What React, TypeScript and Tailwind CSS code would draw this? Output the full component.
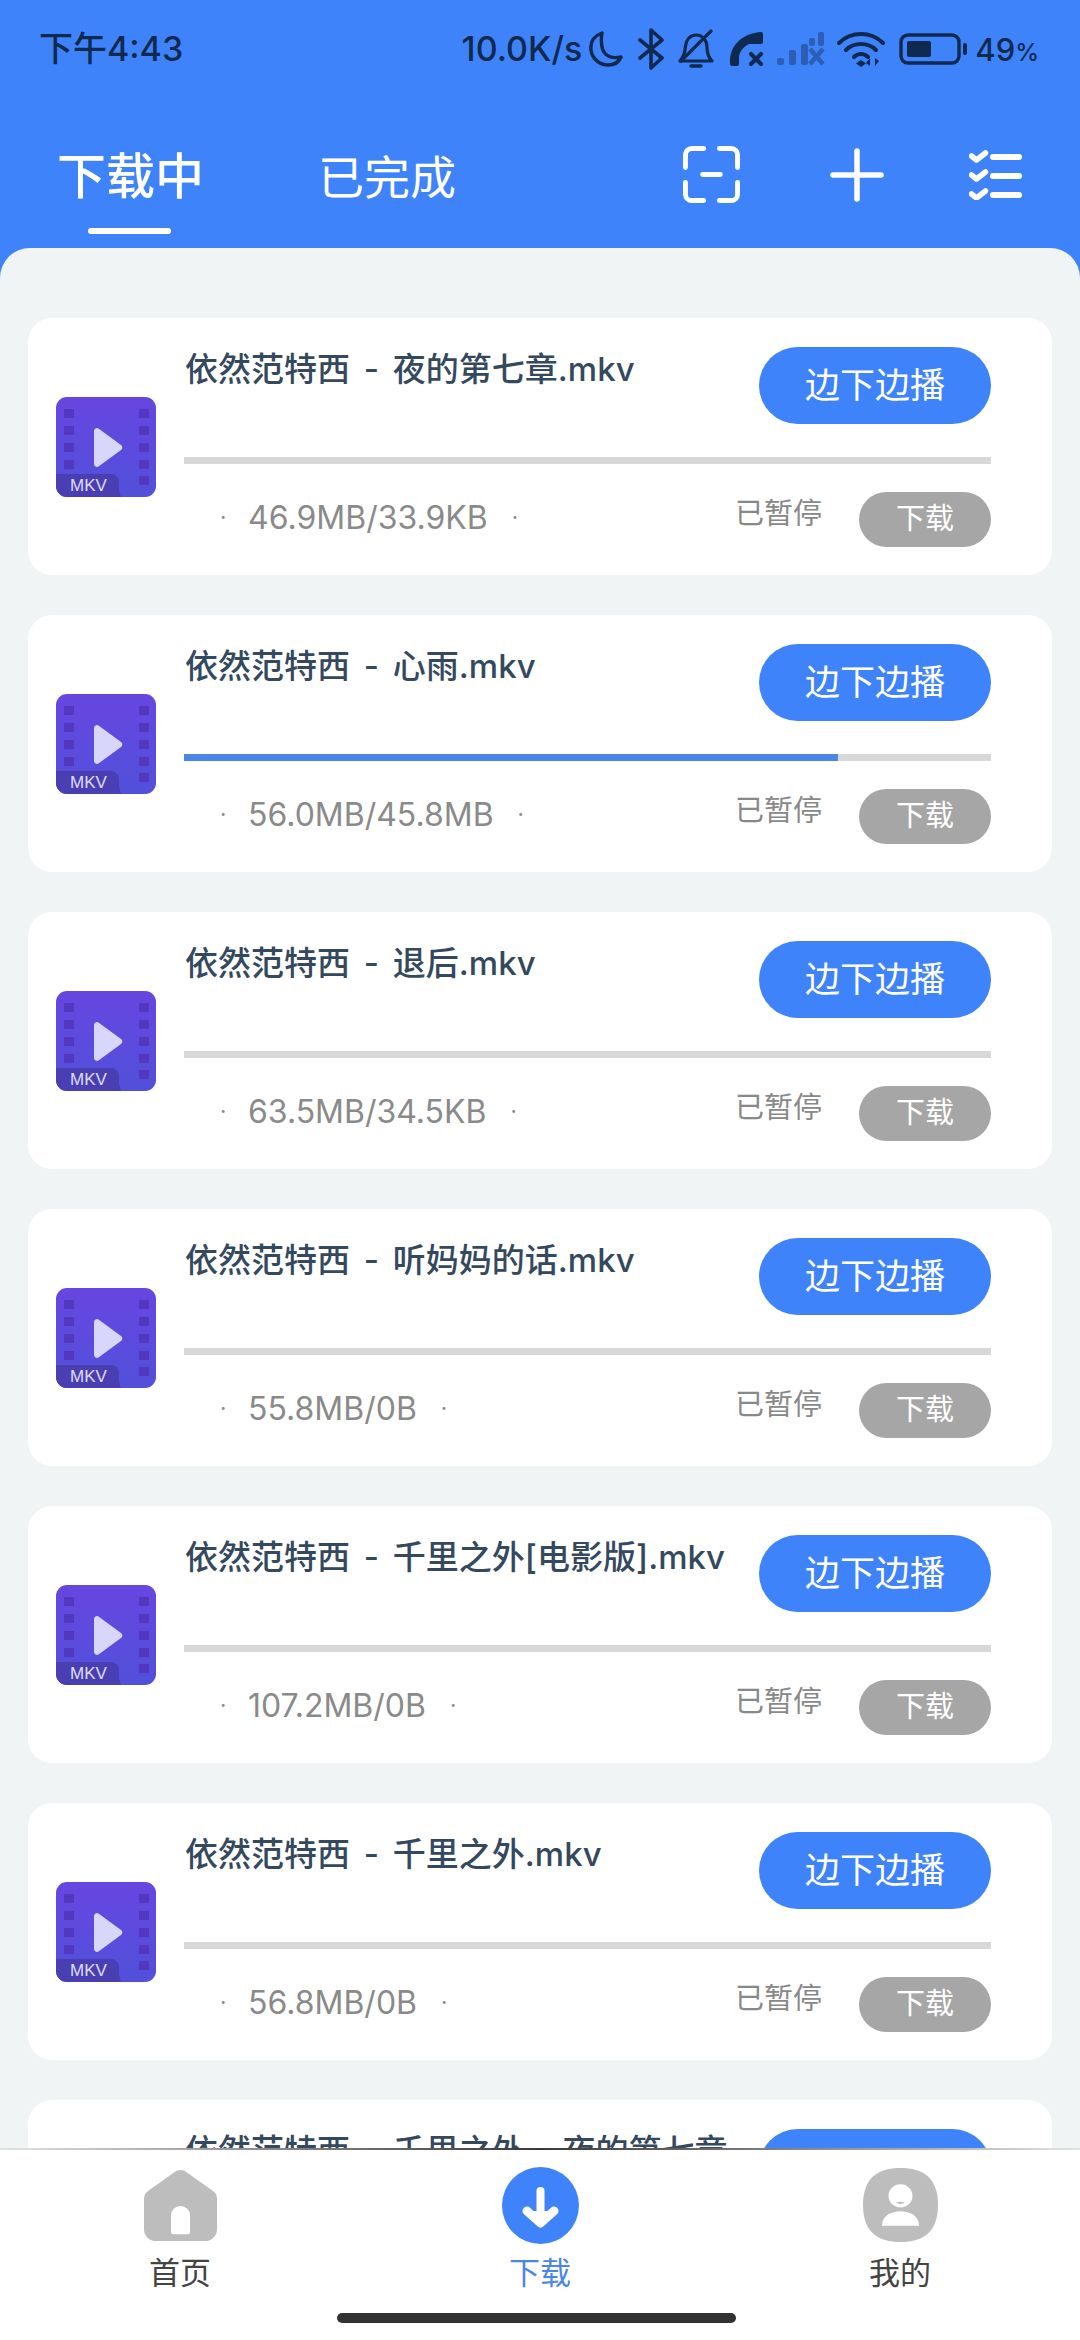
const items = [
  { title: "依然范特西 - 夜的第七章.mkv", size: "46.9MB/33.9KB", progress: 0 },
  { title: "依然范特西 - 心雨.mkv", size: "56.0MB/45.8MB", progress: 81 },
  { title: "依然范特西 - 退后.mkv", size: "63.5MB/34.5KB", progress: 0 },
  { title: "依然范特西 - 听妈妈的话.mkv", size: "55.8MB/0B", progress: 0 },
  { title: "依然范特西 - 千里之外[电影版].mkv", size: "107.2MB/0B", progress: 0 },
  { title: "依然范特西 - 千里之外.mkv", size: "56.8MB/0B", progress: 0 },
  { title: "依然范特西 - 千里之外 · 夜的第七章", size: "56.8MB/0B", progress: 0 },
];

function FileIcon() {
  return (
    <div className="relative h-[100px] w-[100px] shrink-0">
      <svg viewBox="0 0 100 100" className="block h-[100px] w-[100px]">
        <defs>
          <linearGradient id="fg" x1="0" y1="0" x2="0" y2="1">
            <stop offset="0" stopColor="#6746e0" />
            <stop offset="1" stopColor="#5150da" />
          </linearGradient>
        </defs>
        <rect width="100" height="100" rx="11" fill="url(#fg)" />
        {[12, 29, 46, 63].map((y) => (
          <rect key={y} x="8" y={y} width="10" height="9" fill="#5238bf" />
        ))}
        {[12, 29, 46, 63, 79].map((y) => (
          <rect key={y} x="83" y={y} width="10" height="9" fill="#5238bf" />
        ))}
        <path d="M38 34 a3 3 0 0 1 4.500-2.500 L65 48 a3 3 0 0 1 0 5 L42.500 69.500 a3 3 0 0 1-4.500-2.500 Z" fill="#d9d6fb" />
        <path d="M0 77 H55 a8 8 0 0 1 8 8 V93 L65 100 H11 a11 11 0 0 1-11-11 Z" fill="#4a3fb2" />
      </svg>
      <span className="absolute left-[14px] top-[78px] font-['Liberation_Sans',sans-serif] text-[17px] leading-[22px] text-[#dedcfb]">MKV</span>
    </div>
  );
}

function Card({ title, size, progress }: { title: string; size: string; progress: number }) {
  return (
    <div className="flex h-[257px] shrink-0 items-center rounded-[24px] bg-white pl-[28px] pr-[61px]">
      <FileIcon />
      <div className="ml-[28px] flex min-w-0 flex-1 flex-col">
        <div className="flex h-[77px] items-start justify-between">
          <span className="whitespace-nowrap pl-[1px] text-[33px] font-medium leading-[44px] text-[#34495e] [word-spacing:5px]">{title}</span>
          <div className="flex h-[77px] w-[232px] shrink-0 items-center justify-center rounded-[39px] bg-[#3f83fb] text-[35px] text-white">边下边播</div>
        </div>
        <div className="mt-[33px] h-[7px] bg-[#d8d8d8]">
          <div className="h-[7px] bg-[#4a86e8]" style={{ width: `${progress}%` }} />
        </div>
        <div className="mt-[28px] flex h-[55px] items-center">
          <div className="mb-[3px] flex items-center pl-[36px] text-[32px] text-[#8a8a8a]">
            <span className="w-[28px] text-[22px]">·</span>
            <span>{size}</span>
            <span className="ml-[24px] text-[22px]">·</span>
          </div>
          <span className="mb-[11px] ml-auto text-[29px] text-[#888888]">已暂停</span>
          <div className="ml-[37px] flex h-[55px] w-[132px] items-center justify-center rounded-[28px] bg-[#a6a6a6] text-[29px] text-white">下载</div>
        </div>
      </div>
    </div>
  );
}

function StatusIcons() {
  const c = "#10294f";
  return (
    <div className="ml-[6px] flex items-center">
      <svg width="36" height="38" viewBox="0 0 36 38" fill="none" stroke={c} strokeWidth="3.4" strokeLinejoin="round">
        <path d="M14 3 C6 6 2 12 3 20 C4 29 12 35 20 35 C26 35 31 32 33 27 C24 29 17 26 14.500 19 C13 13 13 8 14 3 Z" />
      </svg>
      <svg className="ml-[14px]" width="26" height="42" viewBox="0 0 26 42" fill="none" stroke={c} strokeWidth="3.6" strokeLinejoin="round" strokeLinecap="round">
        <path d="M2 12 L24 30 L13 40 V2 L24 12 L2 30" />
      </svg>
      <svg className="ml-[14px]" width="37" height="40" viewBox="0 0 37 40" fill="none" stroke={c} strokeWidth="3.2" strokeLinecap="round" strokeLinejoin="round">
        <path d="M2 32 H34 C30 28 29 24 29 18 C29 12 25 6 18 6 C12 6 8 11 7.500 17 C7 24 6 28 2 32 Z" />
        <path d="M3 32 L33 2" />
        <path d="M13 37 H23" strokeWidth="3.400" />
      </svg>
      <svg className="ml-[14px]" width="36" height="36" viewBox="0 0 36 36">
        <path d="M32 1 C14 2 1 14 1 30 V33 a2 2 0 0 0 2 2 H8 a2 2 0 0 0 2-2 V27 C10 21 14 16 20 13 H32 a2 2 0 0 0 2-2 V3 a2 2 0 0 0-2-2 Z" fill={c} />
        <path d="M22 23 L32 33 M32 23 L22 33" stroke={c} strokeWidth="4.200" strokeLinecap="round" />
      </svg>
      <svg className="ml-[12px] opacity-40" width="48" height="34" viewBox="0 0 48 34" fill={c}>
        <rect x="0" y="26" width="7" height="7" rx="2" />
        <rect x="12" y="18" width="7" height="15" rx="2" />
        <rect x="24" y="12" width="7" height="21" rx="2" />
        <rect x="32" y="6" width="6" height="8" rx="2" />
        <rect x="41" y="0" width="6" height="14" rx="2" />
        <path d="M33 17 L46 32 M46 17 L33 32" stroke={c} strokeWidth="4.500" />
      </svg>
      <svg className="ml-[12px]" width="48" height="38" viewBox="0 0 48 38" fill="none" stroke={c} strokeLinecap="round">
        <path d="M2 13 C14 1 34 1 46 13" strokeWidth="4" />
        <path d="M9 20 C17 12 31 12 39 20" strokeWidth="4" />
        <path d="M17 27 C21 23 27 23 31 27" strokeWidth="4" />
        <path d="M24 30 l5 3.500 l-5 3.500 l-5 -3.500 Z" fill={c} strokeWidth="0" />
        <path d="M33 28 V36 L29 33 Z M38 28 V36 L42 31 Z" fill={c} strokeWidth="0" />
      </svg>
      <svg className="ml-[14px]" width="70" height="32" viewBox="0 0 70 32">
        <rect x="2" y="2" width="58" height="28" rx="7" fill="none" stroke={c} strokeWidth="3.400" />
        <rect x="8" y="8" width="24" height="16" rx="2" fill={c} />
        <rect x="64" y="10" width="4" height="12" rx="2" fill={c} />
      </svg>
    </div>
  );
}

function Scan() {
  return (
    <svg width="57" height="57" viewBox="0 0 58 58" fill="none" stroke="white" strokeWidth="5" strokeLinecap="round">
      <path d="M2.500 22 V9 a6.500 6.500 0 0 1 6.500-6.500 H21" />
      <path d="M37 2.500 H49 a6.500 6.500 0 0 1 6.500 6.500 V22" />
      <path d="M2.500 37 V49 a6.500 6.500 0 0 0 6.500 6.500 H21" />
      <path d="M37 55.500 H49 a6.500 6.500 0 0 0 6.500-6.500 V37" />
      <path d="M20 29 H38" />
    </svg>
  );
}

function Plus() {
  return (
    <svg width="54" height="54" viewBox="0 0 54 54" fill="none" stroke="white" strokeWidth="5.500" strokeLinecap="round">
      <path d="M27 3 V51 M3 27 H51" />
    </svg>
  );
}

function Checks() {
  return (
    <svg width="53" height="50" viewBox="0 0 53 50" fill="none" stroke="white" strokeLinecap="round" strokeLinejoin="round">
      {[6, 25, 44].map((y) => (
        <g key={y}>
          <path d={`M2.500 ${y} l5 4 l9 -7`} strokeWidth="5.500" />
          <path d={`M24 ${y + 1} H50`} strokeWidth="6" />
        </g>
      ))}
    </svg>
  );
}

function Home() {
  return (
    <svg width="73" height="71" viewBox="0 0 73 74" preserveAspectRatio="none">
      <path d="M30 2.500 a10 10 0 0 1 13 0 L69 22 a10 10 0 0 1 4 8 V62 a12 12 0 0 1-12 12 H12 a12 12 0 0 1-12-12 V30 a10 10 0 0 1 4-8 Z" fill="#bdbdbd" />
      <path d="M27 47 a9.500 9.500 0 0 1 19 0 V65 a2 2 0 0 1-2 2 H29 a2 2 0 0 1-2-2 Z" fill="white" />
    </svg>
  );
}

function Down() {
  return (
    <svg width="77" height="77" viewBox="0 0 77 77">
      <circle cx="38.500" cy="38.500" r="38.500" fill="#3f83fb" />
      <path d="M38.500 24 V54" fill="none" stroke="white" strokeWidth="8" strokeLinecap="round" />
      <path d="M25 44 L38.500 56 L52 44" fill="white" stroke="white" strokeWidth="9" strokeLinecap="round" strokeLinejoin="round" />
    </svg>
  );
}

function Me() {
  return (
    <svg width="75" height="74" viewBox="0 0 75 77" preserveAspectRatio="none">
      <path d="M37.500 0 C60 0 75 10 75 38.500 C75 67 60 77 37.500 77 C15 77 0 67 0 38.500 C0 10 15 0 37.500 0 Z" fill="#bdbdbd" />
      <circle cx="37.500" cy="29" r="12" fill="white" />
      <path d="M33 36 q4.500 3 9 0 q-4.500 -2 -9 0 Z" fill="#bdbdbd" />
      <path d="M19 60 C19 50 28 45 37.500 45 C47 45 56 50 56 60 C56 60.500 55 60 55 60 Z" fill="white" />
    </svg>
  );
}

function NavItem({ icon, label, active }: { icon: React.ReactNode; label: string; active?: boolean }) {
  return (
    <div className="flex w-[360px] flex-col items-center">
      <div className="flex h-[78px] items-center">{icon}</div>
      <span className={`mt-[8px] text-[31px] leading-[42px] ${active ? "text-[#4a86e8]" : "text-[#444444]"}`}>{label}</span>
    </div>
  );
}

export default function App() {
  return (
    <div className="flex h-[2340px] w-[1080px] flex-col overflow-hidden bg-[#3f83fb] font-['Inter','Noto_Sans_CJK_SC',sans-serif]">
      <div className="flex h-[98px] shrink-0 items-center justify-between pl-[39px] pr-[41px] text-[#10294f]">
        <span className="text-[34px] font-medium leading-none">下午4:43</span>
        <div className="flex items-center">
          <span className="text-[34px] font-medium leading-none">10.0K/s</span>
          <StatusIcons />
          <span className="ml-[6px] text-[31px] font-medium leading-none">49<span className="text-[24px]">%</span></span>
        </div>
      </div>
      <div className="flex h-[150px] shrink-0 items-start pl-[57px] text-white">
        <div className="relative mt-[44px]">
          <span className="text-[49px] font-medium leading-[70px]">下载中</span>
          <div className="absolute left-[31px] top-[86px] h-[6px] w-[83px] rounded-full bg-white" />
        </div>
        <span className="ml-[114px] mt-[44px] text-[46px] leading-[70px]">已完成</span>
        <div className="ml-auto mr-[58px] mt-[48px] flex items-center">
          <Scan />
          <div className="ml-[90px]"><Plus /></div>
          <div className="ml-[85px]"><Checks /></div>
        </div>
      </div>
      <div className="relative flex min-h-0 flex-1 flex-col overflow-hidden rounded-t-[30px] bg-[#f0f4f5]">
        <div className="flex flex-col gap-[40px] px-[28px] pt-[70px]">
          {items.map((it, i) => (
            <Card key={i} {...it} />
          ))}
        </div>
      </div>
      <div className="relative h-[192px] shrink-0 bg-white">
        <div className="h-[2px] bg-gradient-to-r from-[#e4e4e4] via-[#3a3a3a] to-[#e4e4e4]" />
        <div className="flex pt-[16px]">
          <NavItem icon={<Home />} label="首页" />
          <NavItem icon={<Down />} label="下载" active />
          <NavItem icon={<Me />} label="我的" />
        </div>
        <div className="absolute bottom-[17px] left-[337px] h-[10px] w-[399px] rounded-full bg-[#333333]" />
      </div>
    </div>
  );
}
